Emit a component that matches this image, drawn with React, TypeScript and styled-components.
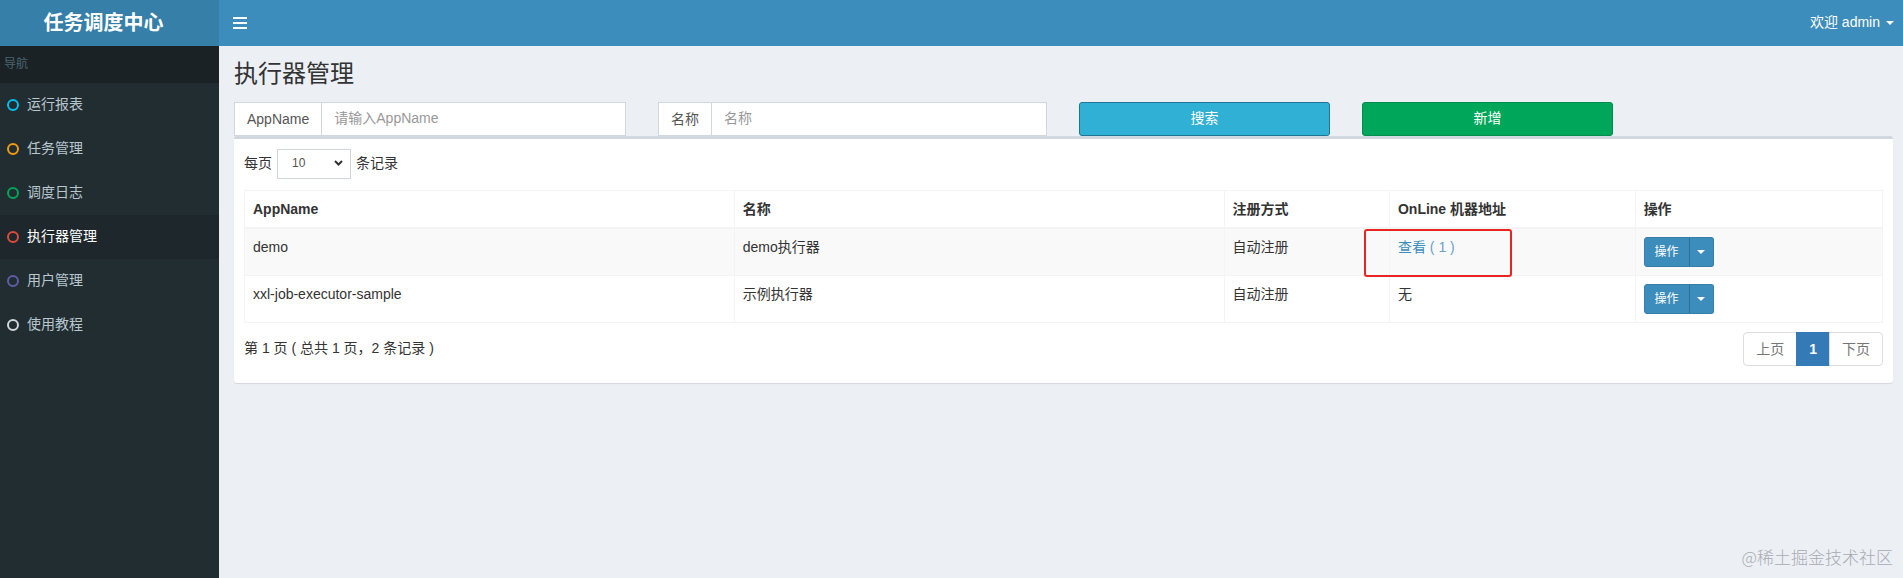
import React from 'react';
import styled, { createGlobalStyle } from 'styled-components';

const GlobalStyle = createGlobalStyle`
  html, body {
    margin: 0;
    padding: 0;
  }
  body {
    font-family: "Liberation Sans", "Noto Sans CJK SC", Arial, sans-serif;
    font-size: 14px;
    line-height: 1.42857;
    color: #333;
    background: #ecf0f5;
  }
  * {
    box-sizing: border-box;
  }
`;

const Wrapper = styled.div`
  display: flex;
  flex-direction: column;
  min-height: 100vh;
  position: relative;
  overflow: hidden;
`;

const Header = styled.header`
  display: flex;
  height: 46px;
  flex-shrink: 0;
`;

const Logo = styled.div`
  width: 219px;
  background: #367fa9;
  color: #fff;
  font-size: 20px;
  font-weight: bold;
  line-height: 46px;
  text-align: center;
  padding-right: 12px;
`;

const Navbar = styled.nav`
  flex: 1;
  background: #3c8dbc;
  display: flex;
  align-items: center;
  justify-content: space-between;
  padding: 0 9px 0 14px;
`;

const Toggle = styled.span`
  display: flex;
  color: #fff;
`;

const UserMenu = styled.div`
  display: flex;
  align-items: center;
  gap: 6px;
  color: #fff;
  font-size: 14px;
`;

const Caret = styled.span<{ size?: number }>`
  display: inline-block;
  width: 0;
  height: 0;
  border-top: ${({ size }) => size ?? 4}px solid currentColor;
  border-left: ${({ size }) => size ?? 4}px solid transparent;
  border-right: ${({ size }) => size ?? 4}px solid transparent;
`;

const Body = styled.div`
  display: flex;
  flex: 1;
`;

const Sidebar = styled.aside`
  width: 219px;
  flex-shrink: 0;
  background: #222d32;
`;

const NavHeader = styled.div`
  height: 37px;
  line-height: 36px;
  padding-left: 4px;
  background: #1a2226;
  color: #4b646f;
  font-size: 12px;
`;

const MenuItem = styled.div<{ active?: boolean }>`
  display: flex;
  align-items: center;
  gap: 8px;
  height: 44px;
  padding-left: 7px;
  font-size: 14px;
  color: ${({ active }) => (active ? '#fff' : '#b8c7ce')};
  background: ${({ active }) => (active ? '#1e282c' : 'transparent')};
`;

const Ring = styled.span<{ color: string }>`
  width: 12px;
  height: 12px;
  border-radius: 50%;
  border: 2.5px solid ${({ color }) => color};
`;

const Content = styled.main`
  flex: 1;
  background: #ecf0f5;
  padding: 15px 10px 15px 15px;
`;

const Title = styled.h1`
  margin: 0 0 15px;
  font-size: 24px;
  font-weight: normal;
  line-height: 26px;
  color: #333;
`;

const SearchRow = styled.div`
  display: grid;
  grid-template-columns: 392px 389px 251px 251px;
  column-gap: 32px;
`;

const InputGroup = styled.div`
  display: flex;
  height: 34px;
`;

const Addon = styled.span`
  border: 1px solid #d2d6de;
  border-right: 0;
  background: #fff;
  color: #555;
  padding: 0 12px;
  line-height: 32px;
  font-size: 14px;
`;

const Input = styled.input`
  flex: 1;
  min-width: 0;
  border: 1px solid #d2d6de;
  padding: 6px 12px;
  font: inherit;
  font-size: 14px;
  color: #555;
  outline: none;
  &::placeholder {
    color: #999;
  }
`;

const Button = styled.button<{ variant: 'info' | 'success' }>`
  height: 34px;
  border-radius: 3px;
  border: 1px solid ${({ variant }) => (variant === 'info' ? '#1f7494' : '#008d4c')};
  background: ${({ variant }) => (variant === 'info' ? '#31b0d5' : '#00a65a')};
  color: #fff;
  font: inherit;
  font-size: 14px;
`;

const Box = styled.section`
  background: #fff;
  border-top: 3px solid #d2d6de;
  border-radius: 3px;
  box-shadow: 0 1px 1px rgba(0, 0, 0, 0.1);
  padding: 10px 10px 17px;
`;

const LengthRow = styled.div`
  display: flex;
  align-items: center;
  gap: 5px;
  height: 30px;
  margin-bottom: 11px;
`;

const SelectWrap = styled.span`
  position: relative;
  display: inline-flex;
`;

const Select = styled.select`
  appearance: none;
  width: 74px;
  height: 30px;
  border: 1px solid #d2d6de;
  background: #fff;
  padding: 0 10px 0 14px;
  font: inherit;
  font-size: 12px;
  color: #555;
`;

const SelectArrow = styled.span`
  position: absolute;
  right: 8px;
  top: 11px;
  display: flex;
  pointer-events: none;
  color: #333;
`;

const Table = styled.table`
  width: 100%;
  border-collapse: collapse;
  table-layout: fixed;
  border: 1px solid #f4f4f4;
`;

const Th = styled.th`
  text-align: left;
  padding: 8px;
  line-height: 20px;
  border: 1px solid #f4f4f4;
  border-bottom-width: 2px;
  font-weight: bold;
  color: #333;
`;

const Tr = styled.tr<{ striped?: boolean }>`
  background: ${({ striped }) => (striped ? '#f9f9f9' : '#fff')};
`;

const Td = styled.td`
  position: relative;
  padding: 8px;
  line-height: 20px;
  vertical-align: top;
  border: 1px solid #f4f4f4;
  color: #333;
`;

const Link = styled.a`
  color: #3c8dbc;
  text-decoration: none;
`;

const Count = styled.span`
  color: #6a9fc8;
`;

const Highlight = styled.span`
  position: absolute;
  left: -26px;
  top: 0;
  width: 148px;
  height: 48px;
  border: 2px solid #e8251f;
  border-radius: 3px;
`;

const BtnGroup = styled.div`
  display: inline-flex;
  height: 30px;
`;

const OpButton = styled.button<{ caret?: boolean }>`
  height: 30px;
  width: ${({ caret }) => (caret ? '25px' : '46px')};
  padding: 0;
  border: 1px solid #367fa9;
  border-left-color: ${({ caret }) => (caret ? '#2e6f95' : '#367fa9')};
  border-radius: ${({ caret }) => (caret ? '0 3px 3px 0' : '3px 0 0 3px')};
  margin-left: ${({ caret }) => (caret ? '-1px' : '0')};
  background: #3c8dbc;
  color: #fff;
  font: inherit;
  font-size: 12px;
  display: flex;
  align-items: center;
  justify-content: center;
`;

const Footer = styled.div`
  display: flex;
  justify-content: space-between;
  margin-top: 9px;
`;

const Info = styled.div`
  padding-top: 7px;
  color: #333;
`;

const Pagination = styled.ul`
  display: flex;
  list-style: none;
  margin: 0;
  padding: 0;
`;

const PageItem = styled.li<{ active?: boolean }>`
  padding: 6px 12px;
  line-height: 20px;
  margin-left: -1px;
  border: 1px solid ${({ active }) => (active ? '#337ab7' : '#ddd')};
  background: ${({ active }) => (active ? '#337ab7' : '#fff')};
  color: ${({ active }) => (active ? '#fff' : '#777')};
  font-weight: ${({ active }) => (active ? 'bold' : 'normal')};
  &:first-child {
    border-radius: 4px 0 0 4px;
  }
  &:last-child {
    border-radius: 0 4px 4px 0;
  }
`;

const Watermark = styled.div`
  position: absolute;
  right: 10px;
  bottom: 9px;
  font-size: 17px;
  color: #a9abb2;
  font-family: "Noto Sans CJK SC", sans-serif;
  font-weight: 300;
`;

const menu = [
  { label: '运行报表', color: '#00c0ef' },
  { label: '任务管理', color: '#f39c12' },
  { label: '调度日志', color: '#00a65a' },
  { label: '执行器管理', color: '#dd4b39', active: true },
  { label: '用户管理', color: '#605ca8' },
  { label: '使用教程', color: '#d2d6de' },
];

const executors = [
  { app: 'demo', name: 'demo执行器', type: '自动注册', online: 1 },
  { app: 'xxl-job-executor-sample', name: '示例执行器', type: '自动注册', online: 0 },
];

const App: React.FC = () => (
  <Wrapper>
    <GlobalStyle />
    <Header>
      <Logo>任务调度中心</Logo>
      <Navbar>
        <Toggle>
          <svg width="14" height="12" viewBox="0 0 14 12" fill="currentColor">
            <rect x="0" y="0" width="14" height="2" />
            <rect x="0" y="5" width="14" height="2" />
            <rect x="0" y="10" width="14" height="2" />
          </svg>
        </Toggle>
        <UserMenu>
          欢迎 admin
          <Caret />
        </UserMenu>
      </Navbar>
    </Header>
    <Body>
      <Sidebar>
        <NavHeader>导航</NavHeader>
        {menu.map((m) => (
          <MenuItem key={m.label} active={m.active}>
            <Ring color={m.color} />
            {m.label}
          </MenuItem>
        ))}
      </Sidebar>
      <Content>
        <Title>执行器管理</Title>
        <SearchRow>
          <InputGroup>
            <Addon>AppName</Addon>
            <Input placeholder="请输入AppName" />
          </InputGroup>
          <InputGroup>
            <Addon>名称</Addon>
            <Input placeholder="名称" />
          </InputGroup>
          <Button variant="info">搜索</Button>
          <Button variant="success">新增</Button>
        </SearchRow>
        <Box>
          <LengthRow>
            每页
            <SelectWrap>
              <Select defaultValue="10">
                <option value="10">10</option>
                <option value="25">25</option>
                <option value="50">50</option>
              </Select>
              <SelectArrow>
                <svg width="9" height="6" viewBox="0 0 9 6" fill="none" stroke="currentColor" strokeWidth="2">
                  <path d="M1 1l3.5 3.5L8 1" />
                </svg>
              </SelectArrow>
            </SelectWrap>
            条记录
          </LengthRow>
          <Table>
            <colgroup>
              <col style={{ width: '29.9%' }} />
              <col style={{ width: '29.9%' }} />
              <col style={{ width: '10.1%' }} />
              <col style={{ width: '15%' }} />
              <col style={{ width: '15.1%' }} />
            </colgroup>
            <thead>
              <tr>
                <Th>AppName</Th>
                <Th>名称</Th>
                <Th>注册方式</Th>
                <Th>OnLine 机器地址</Th>
                <Th>操作</Th>
              </tr>
            </thead>
            <tbody>
              {executors.map((e, i) => (
                <Tr key={e.app} striped={i % 2 === 0}>
                  <Td>{e.app}</Td>
                  <Td>{e.name}</Td>
                  <Td>{e.type}</Td>
                  <Td>
                    {e.online > 0 ? (
                      <>
                        <Link href="#">
                          查看 <Count>( {e.online} )</Count>
                        </Link>
                        <Highlight />
                      </>
                    ) : (
                      '无'
                    )}
                  </Td>
                  <Td>
                    <BtnGroup>
                      <OpButton>操作</OpButton>
                      <OpButton caret>
                        <Caret />
                      </OpButton>
                    </BtnGroup>
                  </Td>
                </Tr>
              ))}
            </tbody>
          </Table>
          <Footer>
            <Info>第 1 页 ( 总共 1 页，2 条记录 )</Info>
            <Pagination>
              <PageItem>上页</PageItem>
              <PageItem active>1</PageItem>
              <PageItem>下页</PageItem>
            </Pagination>
          </Footer>
        </Box>
      </Content>
    </Body>
    <Watermark>@稀土掘金技术社区</Watermark>
  </Wrapper>
);

export default App;
